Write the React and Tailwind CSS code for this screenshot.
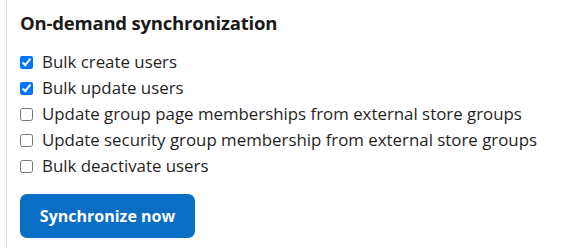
import React, { useState } from 'react';

const opcoes = [
  { id: 'create', label: 'Bulk create users', checked: true },
  { id: 'update', label: 'Bulk update users', checked: true },
  { id: 'groups', label: 'Update group page memberships from external store groups', checked: false },
  { id: 'security', label: 'Update security group membership from external store groups', checked: false },
  { id: 'deactivate', label: 'Bulk deactivate users', checked: false },
];

export default function App() {
  const [marcados, setMarcados] = useState(
    Object.fromEntries(opcoes.map(o => [o.id, o.checked]))
  );

  return (
    <div className="w-[563px] h-[248px] bg-white pl-[6px] overflow-hidden" style={{ fontFamily: '"Open Sans", "Noto Sans", sans-serif' }}>
      <div className="h-full border-l border-[#d5dbe1] pl-[13px] pt-[10px]">
        <h3 className="text-[18.5px] leading-[26px] font-bold text-[#1a1a1a] tracking-[-0.2px]">
          On-demand synchronization
        </h3>

        <div className="mt-[13px] flex flex-col">
          {opcoes.map(o => (
            <label key={o.id} className="flex items-center h-[26px] text-[16.85px] text-[#1f1f1f]">
              <input
                type="checkbox"
                className="w-[13px] h-[13px] my-0 ml-0 mr-[9px]"
                checked={marcados[o.id]}
                onChange={() => setMarcados(prev => ({ ...prev, [o.id]: !prev[o.id] }))}
              />
              {o.label}
            </label>
          ))}
        </div>

        <button className="mt-[15px] w-[175px] h-[44px] rounded-[7px] bg-[#0a6ec4] text-white text-[16px] font-bold">
          Synchronize now
        </button>
      </div>
    </div>
  );
}
